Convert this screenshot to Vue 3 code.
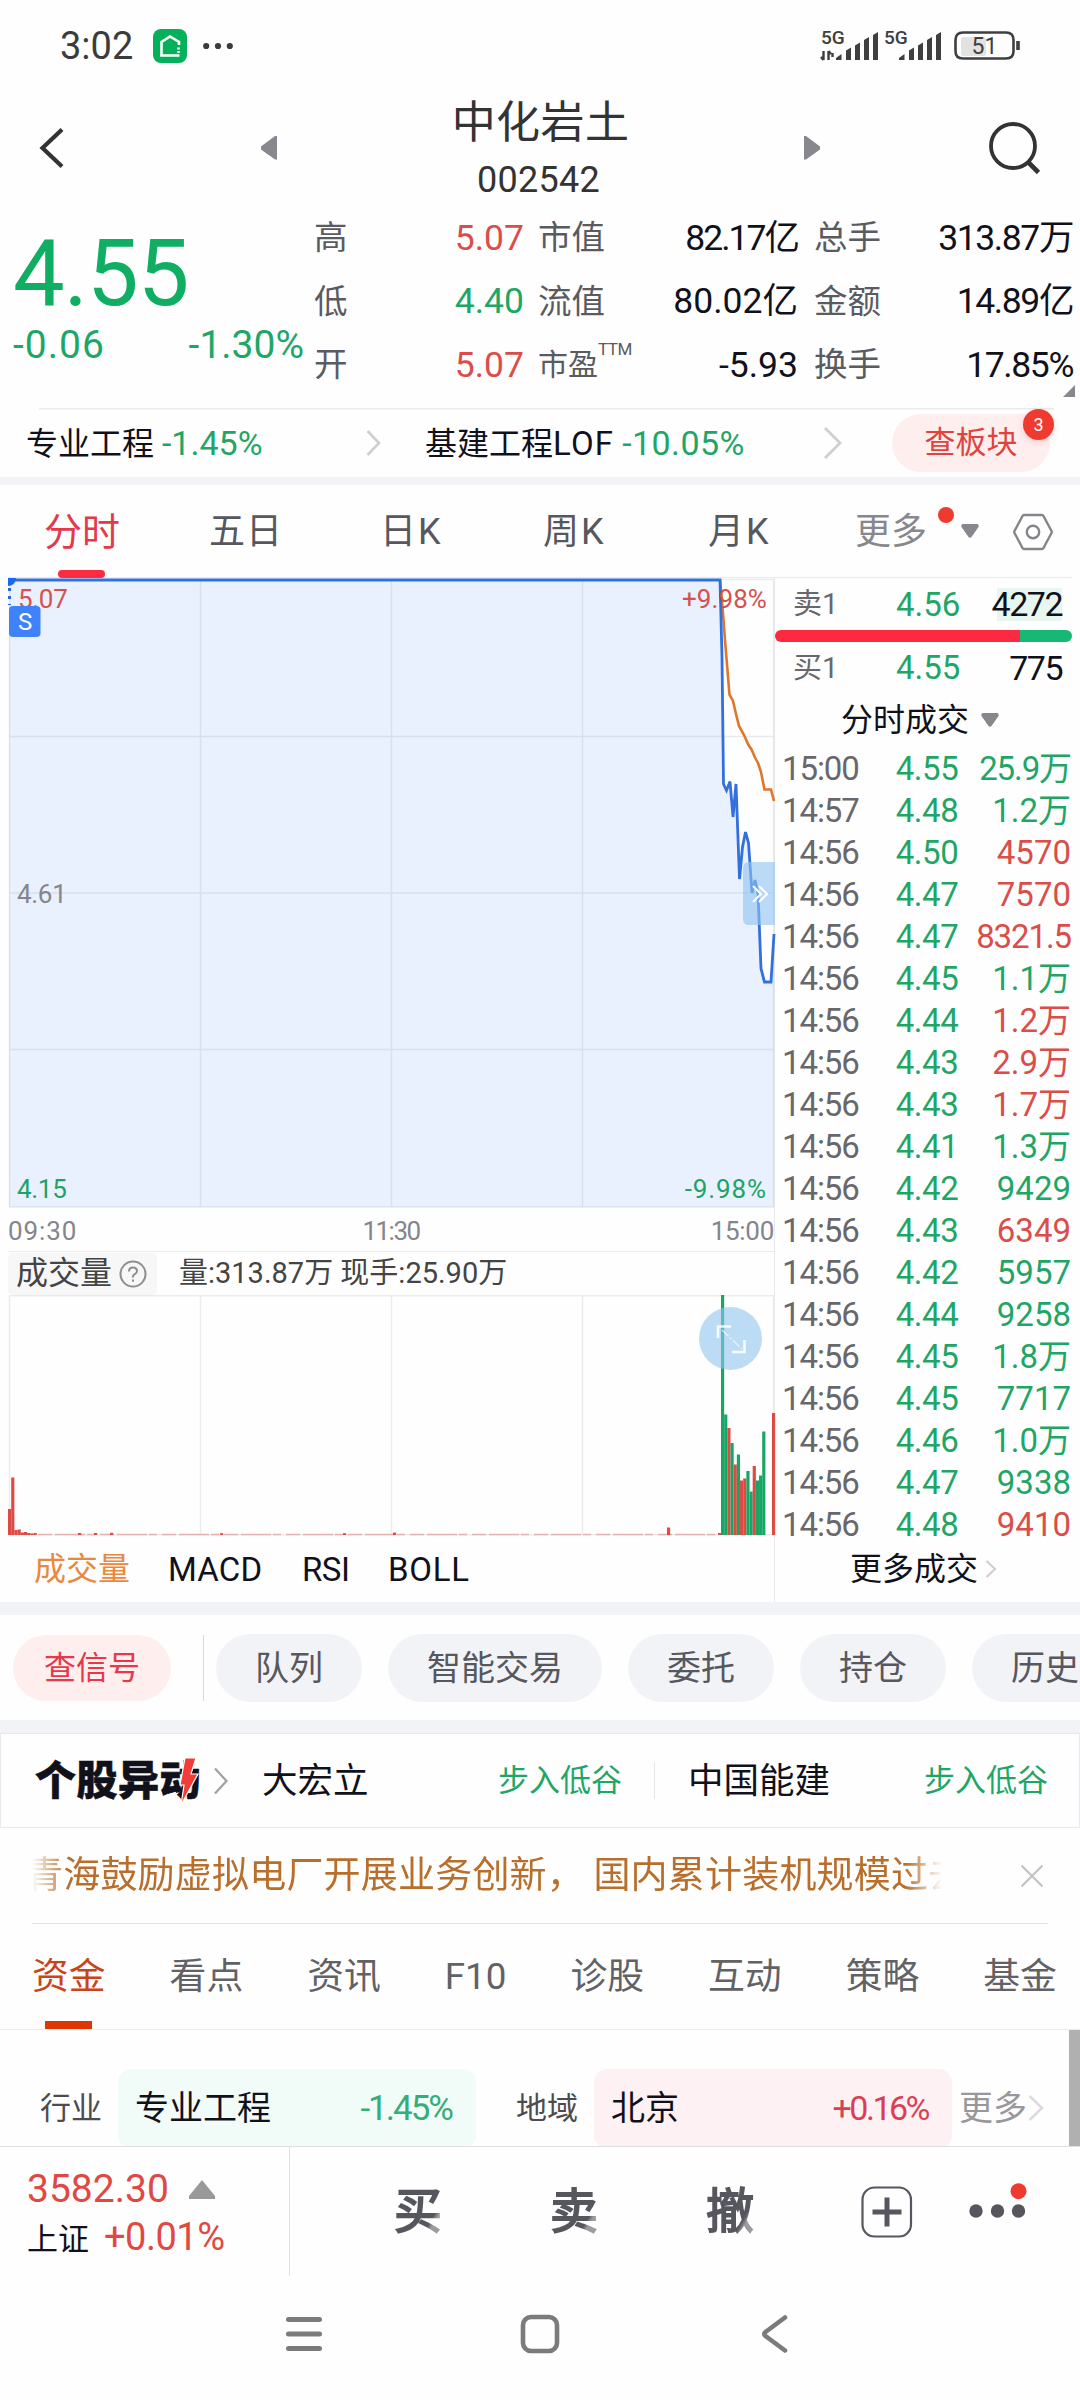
<script setup>
import { ref } from 'vue'

const quoteCells = [
  { label: '高', value: '5.07', tone: 'up' },
  { label: '市值', value: '82.17亿', fit: 'tight' },
  { label: '总手', value: '313.87万', fit: 'snug' },
  { label: '低', value: '4.40', tone: 'down' },
  { label: '流值', value: '80.02亿' },
  { label: '金额', value: '14.89亿', fit: 'snug' },
  { label: '开', value: '5.07', tone: 'up' },
  { label: '市盈', sup: 'TTM', value: '-5.93' },
  { label: '换手', value: '17.85%', fit: 'snug' },
]

const periods = ['分时', '五日', '日K', '周K', '月K']
const activePeriod = ref('分时')

const trades = [
  ['15:00', '4.55', '25.9万', 'down'],
  ['14:57', '4.48', '1.2万', 'down'],
  ['14:56', '4.50', '4570', 'up'],
  ['14:56', '4.47', '7570', 'up'],
  ['14:56', '4.47', '8321.5', 'up'],
  ['14:56', '4.45', '1.1万', 'down'],
  ['14:56', '4.44', '1.2万', 'up'],
  ['14:56', '4.43', '2.9万', 'up'],
  ['14:56', '4.43', '1.7万', 'up'],
  ['14:56', '4.41', '1.3万', 'down'],
  ['14:56', '4.42', '9429', 'down'],
  ['14:56', '4.43', '6349', 'up'],
  ['14:56', '4.42', '5957', 'down'],
  ['14:56', '4.44', '9258', 'down'],
  ['14:56', '4.45', '1.8万', 'down'],
  ['14:56', '4.45', '7717', 'down'],
  ['14:56', '4.46', '1.0万', 'down'],
  ['14:56', '4.47', '9338', 'down'],
  ['14:56', '4.48', '9410', 'up'],
]

// price line, svg units: x 0-767, y 0-630
const priceLine =
  '1,3 712,3 714,80 715.5,207 718.5,213.5 722,204.5 725,240 728,207 731.5,302 734.5,270 737.5,255 740.5,266 744,316 747,303 750,316 753,391.5 756.5,405 763,405 766,357'
const avgLine =
  '712,3 714.5,30 717,63 721.5,117.5 725,124 728,137 731,149 736,158 740.5,168 743.5,172.5 747,180.5 750,186 753,195 756.5,212.5 763,212.5 766,224'

// volume bars: x, height, colour
const tailBars = [
  [240, 'g'], [120.5, 'g'], [107, 'r'], [92, 'g'], [70.5, 'r'], [80.5, 'g'], [54.5, 'r'],
  [56.5, 'r'], [64, 'g'], [43.5, 'g'], [69, 'r'], [54.5, 'g'], [59.5, 'g'], [103.5, 'g'],
]
const volumeBars = [
  [0, 26, 'r'], [3.2, 57.5, 'r'], [6.4, 5, 'r'], [9.6, 5.5, 'r'], [12.8, 2.5, 'r'], [16, 3, 'r'],
  [19.2, 2, 'r'], [22.4, 1.6, 'r'], [25.6, 2, 'r'], [70, 2, 'r'], [86, 2, 'r'], [102, 2.2, 'r'],
  [212, 1.8, 'r'], [335, 1.8, 'r'], [385, 2.4, 'r'], [659, 7.5, 'r'], [710, 2, 'r'],
  ...tailBars.map(([h, c], i) => [713 + i * 3.17, h, c]),
  [764, 122, 'r'],
]

const shortcuts = ['队列', '智能交易', '委托', '持仓', '历史']
const infoTabs = ['资金', '看点', '资讯', 'F10', '诊股', '互动', '策略', '基金']
const activeInfo = ref('资金')
</script>

<template>
  <div class="phone">
    <!-- status bar -->
    <div class="status">
      <span class="clock">3:02</span>
      <svg class="app-icon" width="34" height="34" viewBox="0 0 34 34">
        <rect width="34" height="34" rx="8" fill="#05b05a" />
        <path d="M26 16V13L17 7.500 8.500 13V26.500H26.500" fill="none" stroke="#fff" stroke-width="2.600" />
        <path d="M25.500 18.500v2M25.500 22v2" stroke="#fff" stroke-width="2.600" />
      </svg>
      <svg width="30" height="8" viewBox="0 0 30 8" fill="#3b3b3d">
        <circle cx="3.200" cy="4" r="3.100" /><circle cx="15" cy="4" r="3.100" /><circle cx="26.800" cy="4" r="3.100" />
      </svg>
      <svg class="signals" width="204" height="34" viewBox="0 0 204 34" fill="#3f3f41">
        <text x="1" y="15" class="net">5G</text>
        <path d="M3.500 22v9M1 28l2.500 3M8.500 31v-9M11 25l-2.500-3M12.500 24v4" fill="none" stroke="#3f3f41" stroke-width="2.400" />
        <path d="M16 31v-2l5.500-4v6zM26 31V21.500l5-3V31zM35 31V16.500l5-3V31zM44 31V11l5-3V31zM53 31V6l5-3V31z" />
        <text x="64" y="15" class="net">5G</text>
        <path d="M79 31v-2l5.500-4v6zM89 31V21.500l5-3V31zM98 31V16.500l5-3V31zM107 31V11l5-3V31zM116 31V6l5-3V31z" />
        <rect x="141" y="8" width="25" height="19" rx="3" fill="#e2e2e2" />
        <path d="M135.500 11q0-7.500 7.500-7.500h43q7.500 0 7.500 7.500v11q0 7.500-7.500 7.500h-43q-7.500 0-7.500-7.500z" fill="none" stroke="#3f3f41" stroke-width="2.600" />
        <path d="M198 12v9" stroke="#3f3f41" stroke-width="3.600" />
        <text x="164.500" y="25" class="bat">51</text>
      </svg>
    </div>

    <!-- title -->
    <div class="header">
      <svg class="back" width="26" height="42" viewBox="0 0 26 42">
        <path d="M22 2.500L2.500 21 22 39.500" fill="none" stroke="#333" stroke-width="4.200" />
      </svg>
      <svg class="prev" width="18" height="26" viewBox="0 0 18 26"><path d="M17 1v23.500h-2L1 14.500v-3L15 1z" fill="#88878d" /></svg>
      <div class="stock">
        <div class="name">中化岩土</div>
        <div class="code">002542</div>
      </div>
      <svg class="next" width="18" height="26" viewBox="0 0 18 26"><path d="M1 1v23.500h2L17 14.500v-3L3 1z" fill="#88878d" /></svg>
      <svg class="search" width="54" height="56" viewBox="0 0 54 56" fill="none" stroke="#333" stroke-width="3.800">
        <circle cx="25" cy="26" r="22" /><path d="M40 42l10.500 10.500" stroke-width="4.600" />
      </svg>
    </div>

    <!-- quote -->
    <div class="quote">
      <div class="last">
        <div class="price">4.55</div>
        <div class="delta"><span class="diff">-0.06</span><span class="pct">-1.30%</span></div>
      </div>
      <div class="cells">
        <div v-for="c in quoteCells" :key="c.label" class="cell">
          <span class="label" :class="{ small: c.sup }">{{ c.label }}<sup v-if="c.sup">{{ c.sup }}</sup></span>
          <span class="value" :class="[c.tone, c.fit]">{{ c.value }}</span>
        </div>
      </div>
      <i class="corner"></i>
    </div>

    <!-- sectors -->
    <div class="sectors">
      <div class="sector first">专业工程 <b class="down">-1.45%</b></div>
      <svg class="arrow1" width="16" height="28" viewBox="0 0 16 28"><path d="M1.500 2L13 14 1.500 26" fill="none" stroke="#cfcfd2" stroke-width="2.600" /></svg>
      <div class="sector second">基建工程<span class="latin">LOF</span> <b class="down">-10.05%</b></div>
      <svg class="arrow2" width="20" height="34" viewBox="0 0 20 34"><path d="M2 2l15 15L2 32" fill="none" stroke="#cfcfd2" stroke-width="2.800" /></svg>
      <div class="board">查板块<span class="badge">3</span></div>
    </div>

    <!-- period tabs -->
    <div class="periods">
      <span v-for="p in periods" :key="p" class="period" :class="{ on: p === activePeriod }" @click="activePeriod = p">{{ p }}</span>
      <span class="period more">更多<i class="dot"></i></span>
      <svg class="drop" width="20" height="16" viewBox="0 0 20 16"><path d="M2.500 0h15q2 1 1 3l-7 10q-1.500 1.500-3 0L1.500 3q-1-2 1-3z" fill="#88878d" /></svg>
      <svg class="hex" width="40" height="38" viewBox="0 0 40 38" fill="none" stroke="#85848a" stroke-width="2.400">
        <path d="M11 2h18q1 0 1.500 1l8 15q.5 1 0 2l-8 15q-.5 1-1.500 1H11q-1 0-1.500-1l-8-15q-.5-1 0-2l8-15Q10 2 11 2z" /><circle cx="20" cy="19" r="6.200" />
      </svg>
    </div>

    <!-- chart + order book -->
    <div class="market">
      <div class="charts">
        <svg class="price-chart" width="766" height="674" viewBox="0 0 766 674">
          <polygon :points="priceLine + ' 766,630 1,630'" fill="#e9f1fe" />
          <path d="M1.500 3V630M192.500 3V630M383.500 3V630M574.500 3V630M765.500 3V630M1 2.500H766M1 159.500H766M1 316H766M1 472.500H766M1 630H766" stroke="#99a5be" stroke-opacity=".22" stroke-width="1.400" />
          <path d="M1.500 11V28" stroke="#2766dd" stroke-width="3" stroke-dasharray="3 5" />
          <text x="10" y="31" fill="#d7504e">5.07</text>
          <polyline :points="avgLine" fill="none" stroke="#de762b" stroke-width="2.600" />
          <polyline :points="priceLine" fill="none" stroke="#3270dd" stroke-width="2.800" />
          <text x="759" y="31" fill="#d7504e" text-anchor="end" class="wide">+9.98%</text>
          <path d="M0 1H8Q7 9 0 9z" fill="#1768f5" />
          <rect x="1" y="29" width="31.500" height="31" rx="4" fill="#3f82fb" />
          <text x="17" y="53" fill="#fff" text-anchor="middle" class="s">S</text>
          <text x="9" y="326" fill="#85858b">4.61</text>
          <text x="9" y="621" fill="#1ea365">4.15</text>
          <text x="759" y="621" fill="#1ea365" text-anchor="end" class="wider">-9.98%</text>
          <path d="M767 285H741q-6 0-6 6v51q0 6 6 6h26z" fill="#90c4f0" fill-opacity=".62" />
          <path d="M745 309l8 8-8 8M751 309l8 8-8 8" fill="none" stroke="#fff" stroke-width="2" />
          <text x="0" y="663" fill="#85858b" class="time-label">09:30</text>
          <text x="383" y="663" fill="#85858b" text-anchor="middle" class="narrow">11:30</text>
          <text x="766" y="663" fill="#85858b" text-anchor="end">15:00</text>
        </svg>
        <div class="vol-head">
          <span class="vol-name">成交量
            <svg width="28" height="28" viewBox="0 0 28 28" fill="none" stroke="#8d8d92" stroke-width="2">
              <circle cx="14" cy="14" r="12.500" /><path d="M10 11.500q0-4 4-4t4 3.500q0 2-2.200 3.200T14 17.500M14 19.500v2.200" />
            </svg>
          </span>
          <span class="vol-text">量:313.87万 现手:25.90万</span>
        </div>
        <svg class="vol-chart" width="766" height="241" viewBox="0 0 766 241">
          <path d="M1.500 1V240M192.500 1V240M383.500 1V240M574.500 1V240M765.500 1V240M1 .7H766M1 239.700H766" stroke="#ebebed" stroke-width="1.400" />
          <path d="M30 239.500H710" stroke="#e4b3b1" stroke-width="1.300" stroke-dasharray="14 3 30 2 8 5" />
          <rect v-for="(b, i) in volumeBars" :key="i" :x="b[0]" :y="240 - b[1]" width="3.170" :height="b[1]" :fill="b[2] === 'r' ? '#df4a45' : '#16a765'" />
          <circle cx="722.500" cy="43.500" r="31.500" fill="#90c4f0" fill-opacity=".6" />
          <path d="M710 43V31.500H723M736.500 45V57H724" fill="none" stroke="#fff" stroke-opacity=".85" stroke-width="2.600" />
          <path d="M714 35l20 19" fill="none" stroke="#fff" stroke-opacity=".7" stroke-width="1.200" stroke-dasharray="9 2 2 2" />
        </svg>
        <div class="indicators">
          <span class="on">成交量</span><span class="macd">MACD</span><span class="rsi">RSI</span><span class="boll">BOLL</span>
        </div>
      </div>

      <div class="book">
        <div class="level"><span class="side">卖1</span><span class="lp down">4.56</span><span class="lq ask">4272</span></div>
        <div class="ratio"><i class="buy"></i><i class="sell"></i></div>
        <div class="level bid"><span class="side">买1</span><span class="lp down">4.55</span><span class="lq">775</span></div>
        <div class="book-title">分时成交
          <svg width="20" height="16" viewBox="0 0 20 16"><path d="M2.500 0h15q2 1 1 3l-7 10q-1.500 1.500-3 0L1.500 3q-1-2 1-3z" fill="#88878d" /></svg>
        </div>
        <div class="trades">
          <div v-for="(t, i) in trades" :key="i" class="trade">
            <span class="time">{{ t[0] }}</span>
            <span class="tp down">{{ t[1] }}</span>
            <span class="tq" :class="[t[3], { frac: t[2].length > 4 }]">{{ t[2] }}</span>
          </div>
        </div>
        <div class="book-more">更多成交
          <svg width="12" height="20" viewBox="0 0 12 20"><path d="M1.500 2l8.500 8-8.500 8" fill="none" stroke="#cfcfd2" stroke-width="2.200" /></svg>
        </div>
      </div>
    </div>

    <!-- shortcuts -->
    <div class="shortcuts">
      <span class="signal">查信号</span>
      <i class="split"></i>
      <span v-for="s in shortcuts" :key="s" class="chip">{{ s }}</span>
    </div>

    <!-- movers -->
    <div class="movers">
      <div class="logo">个股异动
        <svg class="bolt" width="20" height="50" viewBox="0 0 20 50">
          <path d="M6 1H17L12 17h7L2 48 5 28H1z" fill="#f23c36" stroke="#fff" stroke-width="1.200" />
        </svg>
      </div>
      <svg class="mv-arrow" width="16" height="30" viewBox="0 0 16 30"><path d="M2 2.500L13.500 15 2 27.500" fill="none" stroke="#a0a0a5" stroke-width="2.200" /></svg>
      <div class="mover m1"><span>大宏立</span><em>步入低谷</em></div>
      <i class="mv-split"></i>
      <div class="mover m2"><span>中国能建</span><em>步入低谷</em></div>
    </div>

    <!-- news ticker -->
    <div class="news">
      <div class="ticker"><p>青海鼓励虚拟电厂开展业务创新， 国内累计装机规模过去</p></div>
      <svg width="24" height="24" viewBox="0 0 24 24"><path d="M1.500 1.500l21 21M22.500 1.500l-21 21" stroke="#c3c3c6" stroke-width="2.200" /></svg>
    </div>

    <!-- info tabs -->
    <div class="info-tabs">
      <span v-for="t in infoTabs" :key="t" :class="{ on: t === activeInfo }" @click="activeInfo = t">{{ t }}</span>
    </div>

    <div class="region">
      <span class="rk">行业</span>
      <div class="rbox green"><span>专业工程</span><b>-1.45%</b></div>
      <span class="rk area">地域</span>
      <div class="rbox red"><span>北京</span><b>+0.16%</b></div>
      <span class="rmore">更多</span>
      <svg width="16" height="28" viewBox="0 0 16 28"><path d="M1.500 2L14 14 1.500 26" fill="none" stroke="#dcdcde" stroke-width="2.600" /></svg>
      <i class="scrollbar"></i>
    </div>

    <!-- bottom trade bar -->
    <div class="dock">
      <div class="index">
        <div class="row1">3582.30 <svg width="26" height="19" viewBox="0 0 26 19"><path d="M13 0l13 16v3H0v-3z" fill="#999" /></svg></div>
        <div class="row2">上证<b>+0.01%</b></div>
      </div>
      <div class="acts">
        <span class="act">买</span><span class="act">卖</span><span class="act che">撤</span>
        <svg class="plus" width="52" height="52" viewBox="0 0 52 52" fill="none" stroke="#56565f">
          <rect x="1.500" y="1.500" width="48.500" height="49" rx="12" stroke-width="2.200" /><path d="M11.500 26h29M26 11.500v29" stroke-width="5" />
        </svg>
        <svg class="dots" width="60" height="36" viewBox="0 0 60 36">
          <g fill="#56565f"><circle cx="8" cy="28" r="6.700" /><circle cx="29.500" cy="28" r="6.700" /><circle cx="50.500" cy="28" r="6.700" /></g>
          <circle cx="50.500" cy="8.200" r="8" fill="#ef3a30" />
        </svg>
      </div>
    </div>

    <!-- system navigation -->
    <div class="nav">
      <svg width="38" height="38" viewBox="0 0 38 38"><path d="M3.500 4.500h31M3.500 19h31M3.500 33.500h31" stroke="#7b7b7b" stroke-width="5" stroke-linecap="round" /></svg>
      <svg width="40" height="40" viewBox="0 0 40 40"><rect x="3" y="3" width="34" height="34" rx="8" fill="none" stroke="#7b7b7b" stroke-width="4.600" /></svg>
      <svg width="28" height="40" viewBox="0 0 28 40"><path d="M25 3.500L5.500 18q-2.500 2 0 4L25 36.500" fill="none" stroke="#7b7b7b" stroke-width="4.600" stroke-linecap="round" /></svg>
    </div>
  </div>
</template>

<style>
body {
  margin: 0;
  background: #fff;
}
</style>

<style scoped>
.phone {
  width: 1080px;
  height: 2400px;
  overflow: hidden;
  display: flex;
  flex-direction: column;
  background: #fefefe;
  color: #11111c;
  font-family: Roboto, "Noto Sans CJK SC", sans-serif;
  line-height: 1.2;
  white-space: nowrap;
}
.phone > div {
  flex-shrink: 0;
  box-sizing: border-box;
}
svg {
  display: block;
  flex-shrink: 0;
  overflow: visible;
}
b, em {
  font-weight: 400;
  font-style: normal;
}
.up { color: #da4d49; }
.down { color: #1fa667; }

/* status bar */
.status {
  height: 92px;
  padding: 0 56px 0 60px;
  display: flex;
  align-items: center;
}
.clock {
  width: 93px;
  padding-top: 1px;
  font-size: 38px;
  color: #3b3b3d;
}
.app-icon { margin-right: 16px; }
.signals { margin-left: auto; }
.net {
  font-size: 19px;
  font-weight: 500;
}
.bat {
  font-size: 23px;
  text-anchor: middle;
}

/* header */
.header {
  height: 112px;
  display: flex;
  align-items: center;
  padding-left: 40px;
}
.prev { margin-left: 194px; }
.stock {
  width: 525px;
  text-align: center;
  color: #333;
  padding-top: 7px;
}
.name {
  font-size: 44px;
  line-height: 57px;
  letter-spacing: .4px;
}
.code {
  margin-left: -4px;
  font-size: 36px;
  line-height: 56px;
  letter-spacing: .3px;
}
.search { margin-left: 167px; }

/* quote */
.quote {
  position: relative;
  height: 204px;
  display: flex;
}
.last {
  width: 314px;
  padding: 25px 0 0 13px;
  box-sizing: border-box;
  color: #0fae63;
}
.price {
  font-size: 92px;
  line-height: 90px;
  letter-spacing: -1px;
}
.delta {
  display: flex;
  width: 291px;
  justify-content: space-between;
  margin-top: 3px;
  font-size: 39px;
  line-height: 46px;
  color: #1fa667;
}
.delta .diff { letter-spacing: 1px; }
.delta .pct { letter-spacing: 0; }
.cells {
  display: grid;
  grid-template-columns: 210px 260px 261px;
  grid-auto-rows: 63.500px;
  column-gap: 14px;
  padding-top: 2.500px;
}
.cell {
  display: flex;
  justify-content: space-between;
  align-items: center;
}
.cell:nth-child(3n) { margin-left: 2px; }
.label {
  font-size: 33.500px;
  color: #5a5a61;
}
.label.small { font-size: 30px; }
sup {
  font-size: 17px;
  vertical-align: 20px;
  line-height: 0;
  letter-spacing: -.5px;
}
.value {
  font-size: 35.500px;
}
.value.snug { letter-spacing: -1.400px; }
.value.tight { letter-spacing: -2px; }
.corner {
  position: absolute;
  right: 5px;
  bottom: 11px;
  border: 6px solid transparent;
  border-right-color: #88878d;
  border-bottom-color: #88878d;
}

/* sectors */
.sectors {
  height: 77px;
  border-bottom: 8px solid #f2f3f7;
  display: flex;
  align-items: center;
  background: linear-gradient(#ebebed, #ebebed) 39px 0 / 1015px 1.500px no-repeat;
}
.sector {
  flex-shrink: 0;
  box-sizing: border-box;
  padding-top: 1px;
  font-size: 32px;
}
.sector b {
  font-size: 34px;
  letter-spacing: 0;
}
.first {
  width: 366px;
  padding-left: 26px;
}
.second {
  width: 380px;
  margin-left: 43px;
}
.second b { letter-spacing: .4px; }
.latin {
  font-size: 33px;
  letter-spacing: 1.200px;
}
.arrow2 { margin-left: 18px; }
.board {
  position: relative;
  margin-left: 49px;
  width: 158px;
  line-height: 58px;
  border-radius: 29px;
  text-align: center;
  font-size: 31px;
  color: #e0433f;
  background: #feeeee;
}
.badge {
  position: absolute;
  right: -4px;
  top: -5px;
  width: 31px;
  line-height: 31px;
  border-radius: 50%;
  background: #f0392f;
  color: #fff;
  font-size: 18px;
  box-shadow: 0 2px 6px rgba(200, 60, 50, .2);
}

/* periods */
.periods {
  height: 93px;
  display: flex;
  align-items: center;
  padding-left: 44px;
  font-size: 36px;
  color: #57575e;
  background: linear-gradient(#ebebed, #ebebed) 8px 92px / 1064px 1px no-repeat;
}
.period {
  position: relative;
  line-height: 92px;
  width: 165px;
  letter-spacing: 1px;
}
.period:nth-child(2) { width: 171px; }
.period:nth-child(3) { width: 163px; letter-spacing: 2px; }
.period:nth-child(4) { width: 165px; letter-spacing: 2px; }
.period:nth-child(5) { width: 147px; letter-spacing: 2px; }
.period.on {
  font-size: 38px;
  letter-spacing: 0;
  color: #e5394a;
}
.period.on::after {
  content: '';
  position: absolute;
  left: 14px;
  bottom: 0;
  width: 47px;
  height: 8px;
  border-radius: 4px;
  background: #fb2b41;
}
.period.more {
  width: 105px;
  letter-spacing: 0;
  color: #88878d;
}
.dot {
  position: absolute;
  left: 83px;
  top: 21px;
  width: 16px;
  height: 16px;
  border-radius: 50%;
  background: #ef3a30;
}
.hex { margin-left: 33px; }

/* market */
.market {
  display: flex;
  height: 1037px;
  border-bottom: 13px solid #f2f3f7;
}
.charts {
  width: 766px;
  padding-left: 8px;
  margin-top: -1px;
  border-right: 1px solid #e9e9eb;
}
.price-chart text {
  font-size: 26px;
  letter-spacing: -.3px;
}
.price-chart .wide { letter-spacing: .1px; }
.price-chart .wider { letter-spacing: .9px; }
.price-chart .time-label { letter-spacing: .9px; }
.price-chart .s { font-size: 24px; }
.price-chart .narrow { letter-spacing: -1.500px; }
.vol-head {
  height: 43px;
  border-top: 1px solid #ececee;
  display: flex;
  align-items: center;
  color: #444;
}
.vol-name {
  display: flex;
  align-items: center;
  gap: 7px;
  width: 149px;
  height: 42px;
  padding-left: 8px;
  box-sizing: border-box;
  border-radius: 5px;
  background: #f7f7f8;
  font-size: 32px;
}
.vol-text {
  margin-left: 22px;
  font-size: 29px;
}
.indicators {
  height: 66px;
  display: flex;
  align-items: center;
  padding-left: 26px;
  font-size: 32px;
}
.indicators .on {
  color: #e9883f;
  width: 134px;
}
.macd, .rsi, .boll {
  padding-top: 1px;
  font-size: 33px;
}
.macd { width: 134px; letter-spacing: .2px; }
.rsi { width: 86px; letter-spacing: -.5px; }
.boll { letter-spacing: .7px; }

/* order book */
.book {
  width: 297px;
  display: flex;
  flex-direction: column;
}
.level {
  display: flex;
  align-items: center;
  height: 52px;
  padding-top: 1px;
  box-sizing: border-box;
}
.level.bid {
  height: 52px;
  padding-top: 0;
}
.side {
  width: 121px;
  padding-left: 18px;
  box-sizing: border-box;
  font-size: 29px;
  color: #68686c;
}
.lp {
  font-size: 33px;
}
.lq {
  margin-left: auto;
  margin-right: 10px;
  font-size: 34px;
  line-height: 33px;
  letter-spacing: -1.500px;
}
.lq.ask { background: linear-gradient(90deg, transparent 5px, #e7f6ef 5px); }
.ratio {
  display: flex;
  height: 12px;
  border-radius: 6px;
  overflow: hidden;
}
.buy {
  width: 245px;
  background: #fd2941;
}
.sell {
  flex: 1;
  background: #17b874;
}
.book-title {
  display: flex;
  align-items: center;
  gap: 11px;
  height: 53px;
  padding-left: 66px;
  font-size: 32px;
}
.trades {
  height: 789px;
  overflow: hidden;
}
.trade {
  display: flex;
  align-items: center;
  height: 42px;
  padding-top: 1px;
  box-sizing: border-box;
  font-size: 33px;
}
.time {
  width: 120px;
  padding-left: 7px;
  box-sizing: border-box;
  color: #68686c;
  letter-spacing: -1.100px;
}
.tp {
  width: 64px;
  text-align: center;
  letter-spacing: -.4px;
}
.tq {
  margin-left: auto;
  margin-right: 1px;
}
.tq.frac { letter-spacing: -1.100px; }
.book-more {
  display: flex;
  align-items: center;
  gap: 7px;
  height: 66px;
  padding-left: 75px;
  font-size: 32px;
}

/* shortcuts */
.shortcuts {
  height: 118px;
  border-bottom: 13px solid #f2f3f7;
  display: flex;
  align-items: center;
  padding-left: 13px;
  font-size: 34px;
  color: #57575e;
}
.shortcuts > * { flex-shrink: 0; }
.signal {
  width: 158px;
  line-height: 66px;
  border-radius: 33px;
  text-align: center;
  font-size: 32px;
  color: #e5394a;
  background: #feeeee;
}
.split {
  width: 1px;
  height: 66px;
  margin: 0 12px 0 32px;
  background: #d9d9dc;
}
.chip {
  margin-right: 26px;
  padding: 0 39px;
  line-height: 68px;
  border-radius: 34px;
  background: #f2f3f7;
}

/* movers */
.movers {
  height: 95px;
  border: 1px solid #e9e9eb;
  display: flex;
  align-items: center;
}
.logo {
  position: relative;
  width: 178px;
  padding: 2px 0 0 34px;
  font-size: 41px;
  font-weight: 900;
  letter-spacing: .5px;
  -webkit-text-stroke: .6px #11111c;
}
.bolt {
  position: absolute;
  left: 178px;
  top: 2px;
}
.mover {
  display: flex;
  align-items: center;
  justify-content: space-between;
  padding-top: 1px;
  font-size: 35.500px;
}
.mover em {
  font-size: 31px;
  color: #1fa667;
}
.m1 {
  width: 360px;
  margin-left: 33px;
}
.m2 { width: 360px; }
.mv-split {
  width: 1px;
  height: 37px;
  margin: 0 33px 0 32px;
  background: #e6e6e8;
}

/* news */
.news {
  height: 96px;
  margin: 0 32px;
  border-bottom: 1px solid #e2e2e5;
  display: flex;
  align-items: center;
  justify-content: space-between;
  padding-right: 4px;
}
.ticker {
  width: 910px;
  overflow: hidden;
  -webkit-mask-image: linear-gradient(90deg, transparent, #000 36px, #000 874px, transparent);
  mask-image: linear-gradient(90deg, transparent, #000 36px, #000 874px, transparent);
}
.ticker p {
  margin: 1px 0 0 -6px;
  font-size: 37px;
  line-height: 60px;
  letter-spacing: .2px;
  color: #b86f2c;
}

/* info tabs */
.info-tabs {
  height: 106px;
  border-bottom: 1px solid #ebebed;
  display: flex;
  gap: 64px;
  padding-left: 32px;
  font-size: 36.800px;
  line-height: 106px;
  color: #626266;
}
.info-tabs span {
  position: relative;
  height: 105px;
}
.info-tabs .on { color: #cb4418; }
.info-tabs .on::after {
  content: '';
  position: absolute;
  left: 13px;
  bottom: 0;
  width: 47px;
  height: 8px;
  background: #dd3503;
}

/* region row */
.region {
  position: relative;
  height: 116px;
  overflow: hidden;
  display: flex;
  align-items: center;
  padding: 40px 0 0 40px;
}
.rk {
  width: 78px;
  padding-top: 1px;
  font-size: 31px;
  color: #4c4c50;
}
.area {
  margin-left: 40px;
}
.rbox {
  width: 358px;
  height: 79px;
  padding: 1px 24px 0 17px;
  box-sizing: border-box;
  display: flex;
  flex-shrink: 0;
  align-items: center;
  justify-content: space-between;
  border-radius: 13px;
  font-size: 34px;
}
.rbox b {
  font-size: 35px;
  letter-spacing: -2px;
}
.green { background: #f1fbf8; }
.green b { color: #35ad76; }
.red { background: #fef1f3; }
.red b {
  color: #d93f52;
  font-size: 34px;
  letter-spacing: -2.500px;
}
.rmore {
  margin: 0 1px 0 7px;
  padding-top: 1px;
  font-size: 34px;
  color: #98989c;
}
.scrollbar {
  position: absolute;
  right: 0;
  top: 0;
  width: 11px;
  height: 116px;
  background: #b0b0b0;
}

/* dock */
.dock {
  height: 130px;
  border-top: 1px solid #dfdfe2;
  display: flex;
}
.index {
  width: 290px;
  padding: 15px 0 0 27px;
  box-sizing: border-box;
  border-right: 1px solid #e0e0e3;
}
.row1 {
  display: flex;
  align-items: center;
  gap: 20px;
  font-size: 39px;
  line-height: 54px;
  color: #df4843;
}
.row2 {
  margin-top: -2px;
  font-size: 31px;
  line-height: 46px;
}
.row2 b {
  margin-left: 15px;
  font-size: 38px;
  letter-spacing: -.5px;
  color: #df4843;
}
.acts {
  display: flex;
  align-items: center;
  padding-left: 104px;
}
/* the last stroke of each glyph fades to a lighter grey */
.act {
  width: 48px;
  margin-right: 108px;
  font-size: 48px;
  font-weight: 400;
  color: transparent;
  -webkit-text-stroke: 1.800px transparent;
  background: linear-gradient(120deg, #56565f 72%, #9b9ba1 78%);
  -webkit-background-clip: text;
  background-clip: text;
}
.act.che { margin-right: 107px; }
.dots {
  margin: -21px 0 0 55px;
}

/* nav */
.nav {
  height: 124px;
  padding: 0 292px 8px 285px;
  display: flex;
  align-items: center;
  justify-content: space-between;
}
.nav svg:nth-child(2) { margin-right: 3px; }
</style>
